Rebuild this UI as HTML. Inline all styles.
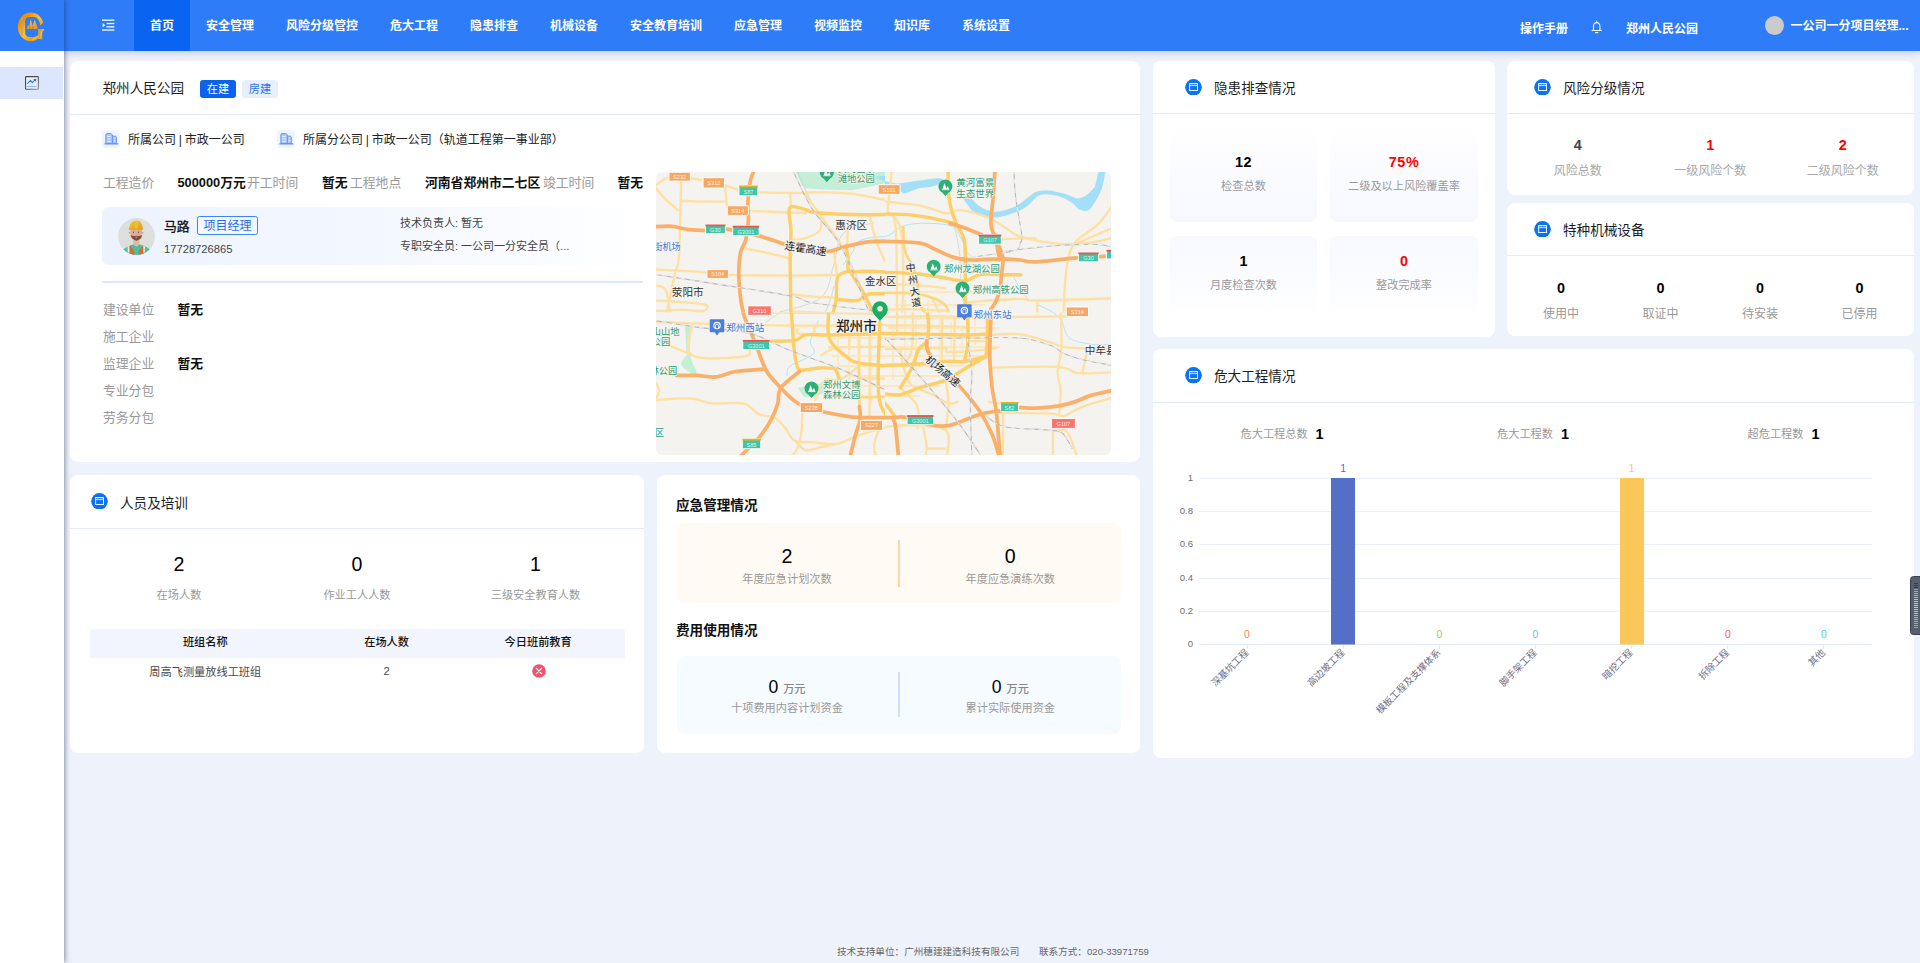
<!DOCTYPE html>
<html lang="zh-CN">
<head>
<meta charset="utf-8">
<title>智慧工地</title>
<style>
*{box-sizing:border-box;margin:0;padding:0}
html,body{width:1920px;height:963px;overflow:hidden}
body{background:#eef2fb;font-family:"Liberation Sans","Noto Sans CJK SC",sans-serif;color:#222;position:relative}
.abs{position:absolute}
.t{position:absolute;white-space:nowrap;line-height:20px;height:20px}
.c{transform:translateX(-50%);text-align:center}
.card{position:absolute;background:#fff;border-radius:8px}
.hr{position:absolute;height:1px;background:#e3ebfb}
/* nav */
#nav{position:absolute;left:0;top:0;width:1920px;height:51px;background:#2f7cf8;box-shadow:0 1px 8px rgba(40,60,100,.26);z-index:5}
#nav .mi{position:absolute;top:1px;height:51px;line-height:51px;color:#fff;font-size:12px;font-weight:bold;white-space:nowrap}
#nav .act{background:#0a64f1;left:134px;width:56px;text-align:center;top:0!important;padding-top:1px}
#side{position:absolute;left:0;top:0;width:64px;height:963px;background:#fff;box-shadow:1px 0 5px rgba(30,40,80,.5);z-index:6}
#side .logo{position:absolute;left:0;top:0;width:64px;height:51px;background:#2f7cf8}
#side .on{position:absolute;left:0;top:67px;width:63px;height:32px;background:#dce7fd}
.ttl{font-size:13.6px;color:#1d1d1d}
.ico{position:absolute;width:17px;height:16.6px}
.num{font-weight:bold;font-size:14.4px}
.lab{font-size:11.2px;color:#999}
.g{color:#999}
.b{font-weight:bold;color:#111}
</style>
</head>
<body>
<!-- NAV -->
<div id="nav">
  <svg class="abs" style="left:102px;top:19px" width="13" height="12" viewBox="0 0 13 12"><g fill="#fff"><rect x="0" y="0.5" width="12.4" height="1.3"/><rect x="4.6" y="3.9" width="7.8" height="1.3"/><rect x="4.6" y="7.2" width="7.8" height="1.3"/><rect x="0" y="10.4" width="12.4" height="1.3"/><path d="M0.6 4.1 L3.4 6.2 L0.6 8.3Z"/></g></svg>
  <div class="mi act">首页</div>
  <div class="mi" style="left:206px">安全管理</div>
  <div class="mi" style="left:286px">风险分级管控</div>
  <div class="mi" style="left:390px">危大工程</div>
  <div class="mi" style="left:470px">隐患排查</div>
  <div class="mi" style="left:550px">机械设备</div>
  <div class="mi" style="left:630px">安全教育培训</div>
  <div class="mi" style="left:734px">应急管理</div>
  <div class="mi" style="left:814px">视频监控</div>
  <div class="mi" style="left:894px">知识库</div>
  <div class="mi" style="left:962px">系统设置</div>
  <div class="mi" style="left:1520px;top:4px">操作手册</div>
  <svg class="abs" style="left:1590.6px;top:20.2px" width="11.4" height="14.6" viewBox="0 0 13 15" preserveAspectRatio="none"><path d="M6.5 1.2 V2.4 M2.8 10.6 V6.6 A3.7 3.9 0 0 1 10.2 6.6 V10.6 M1.2 10.8 H11.8 M5.2 12.9 H7.8" fill="none" stroke="#fff" stroke-width="1.2" stroke-linecap="round"/></svg>
  <div class="mi" style="left:1626px;top:4px">郑州人民公园</div>
  <div class="abs" style="left:1764.5px;top:15.5px;width:19.5px;height:19.5px;border-radius:50%;background:#cbcbcb"></div>
  <div class="mi" style="left:1790.5px">一公司一分项目经理...</div>
</div>
<!-- SIDEBAR -->
<div id="side">
  <div class="logo"></div>
  <svg class="abs" style="left:8px;top:4px" width="48" height="44" viewBox="0 0 1051 963">
    <defs><linearGradient id="gd" x1="0" y1="0" x2="1" y2="1"><stop offset="0" stop-color="#f59a0a"/><stop offset=".22" stop-color="#f08c00"/><stop offset=".5" stop-color="#ffc42e"/><stop offset=".75" stop-color="#f29408"/><stop offset="1" stop-color="#ffc21e"/></linearGradient>
    <linearGradient id="gd2" x1="0" y1="0" x2="0" y2="1"><stop offset="0" stop-color="#ffc62c"/><stop offset="1" stop-color="#f0900a"/></linearGradient></defs>
    <path fill-rule="evenodd" fill="url(#gd)" d="M215 500 A285 315 0 1 1 785 500 A285 315 0 1 1 215 500Z M375 390 C375 310 410 283 480 283 L570 283 C650 290 700 360 705 470 L705 560 C700 660 640 722 560 722 L470 722 C410 722 375 690 375 620Z"/>
    <path d="M640 545 L870 545 L870 360 L800 385 L705 470 L640 470Z" fill="#2f7cf8"/>
    <path d="M690 600 L870 600 L870 830 L600 830 L640 760 L690 700Z" fill="#2f7cf8"/>
    <path d="M660 545 H790 V575 L750 592 V775 L660 758Z" fill="url(#gd)"/>
    <path d="M520 800 Q620 790 662 755 L662 700 Q600 730 520 722Z" fill="url(#gd)"/>
    <rect x="286" y="300" width="36" height="400" fill="#a9a696" opacity=".85"/>
    <rect x="672" y="560" width="34" height="200" fill="#a9a696" opacity=".85"/>
    <path d="M405 545 L440 450 L462 500 L495 335 L540 470 L585 345 L640 500 L650 545Z" fill="url(#gd2)"/>
    <path d="M462 492 L474 548 M540 462 L547 548" stroke="#2f7cf8" stroke-width="11" opacity=".9"/><path d="M478 420 L500 545 M572 420 L592 545" stroke="#c9a050" stroke-width="8" opacity=".5"/>
  </svg>
  <div class="on"></div>
  <svg class="abs" style="left:16px;top:68px" width="32" height="30" viewBox="0 0 1027 963"><defs><linearGradient id="sg" x1="0" y1="0" x2="1" y2="1"><stop offset="0" stop-color="#444"/><stop offset=".5" stop-color="#555"/><stop offset="1" stop-color="#909298"/></linearGradient></defs><rect x="306" y="277" width="412" height="406" rx="28" fill="#e7efff" stroke="url(#sg)" stroke-width="36"/><path d="M362 595 H648" stroke="#8ab3fb" stroke-width="30" stroke-linecap="round"/><path d="M365 498 L465 398 L525 468 L610 385" fill="none" stroke="#2f7cf8" stroke-width="34" stroke-linecap="round" stroke-linejoin="round"/><path d="M556 362 L652 342 L634 442Z" fill="#1a6df5"/></svg>
</div>

<!-- MAIN CARDS GO HERE -->
<svg width="0" height="0" style="position:absolute"><defs>
<symbol id="hi" viewBox="0 0 17 17"><circle cx="8.5" cy="8.5" r="8.5" fill="#0b72f0"/><rect x="4.55" y="4.7" width="8.05" height="7.1" fill="none" stroke="#fff" stroke-width="1" stroke-opacity=".95"/><path d="M4.6 6.8 H12.6" stroke="#fff" stroke-width="0.9" stroke-opacity=".9"/><path d="M5.6 5.75 H8 M9.2 5.75 H11.7" stroke="#fff" stroke-width="0.6" stroke-opacity=".5"/></symbol>
<symbol id="bld" viewBox="195 195 575 575"><rect x="195" y="195" width="575" height="575" rx="105" fill="#eff4fe"/><path d="M318 628 V348 Q318 308 358 308 H462 Q498 308 514 342 L536 392 H618 Q654 392 654 432 V628Z" fill="#aac6fb" stroke="#5e92f6" stroke-width="30" stroke-linejoin="round"/><path d="M528 392 V628" stroke="#5e92f6" stroke-width="30"/><path d="M362 400 H472 M362 482 H472 M362 562 H472 M574 452 H620 M574 534 H620" stroke="#e4edfe" stroke-width="34"/><path d="M288 640 H698" stroke="#5e92f6" stroke-width="44" stroke-linecap="round"/></symbol>
</defs></svg>

<!-- PROJECT CARD -->
<div class="card" style="left:70px;top:61px;width:1070px;height:401px"></div>
<div class="t ttl" style="left:102.5px;top:79px">郑州人民公园</div>
<div class="abs" style="left:200px;top:80px;width:36px;height:18px;border-radius:3px;background:#0a62ee;color:#fff;font-size:11.2px;line-height:18px;text-align:center">在建</div>
<div class="abs" style="left:242px;top:80px;width:36px;height:18px;border-radius:3px;background:#e7effd;color:#2b74f0;font-size:11.2px;line-height:18px;text-align:center">房建</div>
<div class="hr" style="left:70px;top:114px;width:1070px"></div>
<svg class="abs" style="left:102px;top:130px" width="18" height="18"><use href="#bld"/></svg>
<div class="t" style="left:128px;top:130px;font-size:12px;color:#222">所属公司<span style="margin:0 2.8px">|</span>市政一公司</div>
<svg class="abs" style="left:277px;top:130px" width="18" height="18"><use href="#bld"/></svg>
<div class="t" style="left:303px;top:130px;font-size:12px;color:#222">所属分公司<span style="margin:0 2.8px">|</span>市政一公司（轨道工程第一事业部）</div>

<div class="t" style="left:103px;top:173px;font-size:12.8px"><span class="g">工程造价</span></div>
<div class="t" style="left:177.5px;top:173px;font-size:12.8px"><span class="b">500000万元</span></div>
<div class="t" style="left:247px;top:173px;font-size:12.8px"><span class="g">开工时间</span></div>
<div class="t" style="left:322px;top:173px;font-size:12.8px"><span class="b">暂无</span></div>
<div class="t" style="left:350px;top:173px;font-size:12.8px"><span class="g">工程地点</span></div>
<div class="t" style="left:425px;top:173px;font-size:12.8px"><span class="b">河南省郑州市二七区</span></div>
<div class="t" style="left:543px;top:173px;font-size:12.8px"><span class="g">竣工时间</span></div>
<div class="t" style="left:617.5px;top:173px;font-size:12.8px"><span class="b">暂无</span></div>

<div class="abs" style="left:102px;top:207px;width:541px;height:58px;border-radius:7px;background:linear-gradient(90deg,#edf3fe 0,#f4f8ff 55%,#fff 100%)"></div>
<svg class="abs" style="left:112px;top:212px" width="50" height="48" viewBox="0 0 1003 963">
  <defs><clipPath id="avc"><circle cx="492" cy="492" r="370"/></clipPath>
  <linearGradient id="hg" x1="0" y1="0" x2="1" y2="1"><stop offset="0" stop-color="#f2c234"/><stop offset="1" stop-color="#dfa318"/></linearGradient></defs>
  <circle cx="492" cy="492" r="370" fill="#dededd"/>
  <g clip-path="url(#avc)">
    <path d="M215 760 Q300 690 430 648 L490 690 L550 648 Q690 690 775 760 L720 900 L260 900Z" fill="#40c69c"/>
    <path d="M362 668 L445 775 L458 900 L352 900 L352 700Z M622 668 L538 775 L526 900 L640 900 L640 700Z" fill="#e2633d"/>
    <path d="M312 690 L345 680 L350 820 L318 810Z M628 680 L662 690 L656 810 L624 820Z" fill="#f1ece8"/>
    <rect x="628" y="700" width="14" height="110" fill="#b9d9ee"/>
    <path d="M425 540 H548 V650 Q490 700 425 650Z" fill="#dcb8aa"/>
    <circle cx="352" cy="412" r="17" fill="#c99a85"/><circle cx="616" cy="412" r="17" fill="#c99a85"/>
    <path d="M368 340 H602 V470 Q600 560 490 572 Q380 560 368 470Z" fill="#dcae9b"/>
    <path d="M378 462 Q420 495 490 478 Q560 495 600 462 Q600 545 490 575 Q385 545 378 462Z" fill="#7b5038"/>
    <ellipse cx="490" cy="503" rx="26" ry="13" fill="#d98a9a"/>
    <ellipse cx="432" cy="405" rx="10" ry="14" fill="#3d3a40"/><ellipse cx="532" cy="405" rx="10" ry="14" fill="#3d3a40"/>
    <path d="M345 345 Q352 230 430 185 Q490 160 555 185 Q615 235 618 345Z" fill="url(#hg)"/>
    <path d="M336 332 H624 V352 H336Z" fill="#d9a01c"/>
    <path d="M470 178 Q490 170 512 178 L520 330 H462Z" fill="#f4c83e" opacity=".7"/>
  </g>
</svg>
<div class="t" style="left:164px;top:217px;font-size:12.8px;color:#111;-webkit-text-stroke:.3px #111">马路</div>
<div class="abs" style="left:197px;top:215.5px;width:61px;height:19.5px;border:1px solid #3f84f6;border-radius:2.5px;color:#1f6cf0;font-size:12px;line-height:19px;text-align:center;background:#f3f7ff">项目经理</div>
<div class="t" style="left:164px;top:238.5px;font-size:11.2px;color:#444">17728726865</div>
<div class="t" style="left:400px;top:213px;font-size:11px;color:#444">技术负责人: 暂无</div>
<div class="t" style="left:400px;top:236px;font-size:11px;color:#444">专职安全员: 一公司一分安全员（...</div>
<div class="hr" style="left:102px;top:281.4px;width:541px;height:1.3px;background:#dde7fc"></div>
<div class="t g" style="left:103px;top:299.5px;font-size:12.8px">建设单位</div>
<div class="t b" style="left:177.5px;top:299.5px;font-size:12.8px">暂无</div>
<div class="t g" style="left:103px;top:326.7px;font-size:12.8px">施工企业</div>
<div class="t g" style="left:103px;top:353.9px;font-size:12.8px">监理企业</div>
<div class="t b" style="left:177.5px;top:353.9px;font-size:12.8px">暂无</div>
<div class="t g" style="left:103px;top:381.1px;font-size:12.8px">专业分包</div>
<div class="t g" style="left:103px;top:408.3px;font-size:12.8px">劳务分包</div>
<!--MAPSTART-->
<svg class="abs" style="left:656px;top:172px;border-radius:6px" width="455" height="283" viewBox="656 172 455 283" font-family="Liberation Sans, Noto Sans CJK SC, sans-serif">
<defs>
<clipPath id="cqTL"><rect x="656" y="172" width="229" height="140.5"/></clipPath>
<clipPath id="cqTR"><rect x="885" y="172" width="226" height="140.5"/></clipPath>
<clipPath id="cqBL"><rect x="656" y="312.5" width="229" height="142.5"/></clipPath>
<clipPath id="cqBR"><rect x="885" y="312.5" width="226" height="142.5"/></clipPath>
</defs>
<rect x="656" y="172" width="455" height="283" fill="#f5f3f0"/>
<path d="M838 336V396 M849 330V400 M860 336V402 M871 330V404 M893 325V380 M905 300V372 M916 318V372 M928 300V365 M940 318V360 M951 322V352 M962 325V350 M975 318V345 M832 338H992 M828 347H1000 M832 356H985 M838 366H975 M845 376H960 M850 386H940 M856 396H920 M888 328H1000 M895 318H1000 M895 305H985 M895 292H990" fill="none" stroke="#fde5b4" stroke-width="1.3"/>
<g clip-path="url(#cqTL)"><g transform="translate(650,165) scale(0.155743)" fill="#c5eed6"><path d="M930 30 L1560 30 L1560 105 L1450 130 L1300 162 L1100 158 L1000 150 L975 130Z"/></g></g>
<g clip-path="url(#cqBL)"><g transform="translate(650,310) scale(0.155743)" fill="#c5eed6"><path d="M225 110 C231.2 110.0 256.5 80.0 262 110 C267.5 140.0 251.7 241.7 258 290 C264.3 338.3 298.0 380.0 300 400 C302.0 420.0 286.7 418.3 270 410 C253.3 401.7 205.8 370.0 200 350 C194.2 330.0 229.2 300.0 235 290Z M950 500 C958.3 498.3 970.0 495.0 1000 490 C1030.0 485.0 1113.3 461.7 1130 470 C1146.7 478.3 1123.3 525.0 1100 540 C1076.7 555.0 1008.3 556.7 990 560Z"/></g></g>
<g clip-path="url(#cqTL)"><g transform="translate(650,165) scale(0.155743)" fill="#a3e0f7"><path d="M1440 75 C1460.0 74.2 1540.0 61.7 1560 70 C1580.0 78.3 1570.0 119.2 1560 125 C1550.0 130.8 1510.0 108.3 1500 105Z"/></g></g>
<g clip-path="url(#cqTR)"><g transform="translate(880,165) scale(0.155743)" fill="#a3e0f7"><path d="M1405 30 C1411.7 30.0 1441.7 10.0 1445 30 C1448.3 50.0 1435.0 116.7 1425 150 C1415.0 183.3 1399.2 206.7 1385 230 C1370.8 253.3 1357.5 280.8 1340 290 C1322.5 299.2 1298.3 293.3 1280 285 C1261.7 276.7 1251.7 254.2 1230 240 C1208.3 225.8 1180.0 208.3 1150 200 C1120.0 191.7 1075.0 188.3 1050 190 C1025.0 191.7 1016.7 198.3 1000 210 C983.3 221.7 970.0 245.0 950 260 C930.0 275.0 911.7 287.5 880 300 C848.3 312.5 793.3 330.0 760 335 C726.7 340.0 706.7 335.8 680 330 C653.3 324.2 620.0 313.3 600 300 C580.0 286.7 570.8 264.2 560 250 C549.2 235.8 531.7 221.3 535 215 C538.3 208.7 562.5 203.7 580 212 C597.5 220.3 616.7 250.7 640 265 C663.3 279.3 693.3 293.8 720 298 C746.7 302.2 773.3 296.3 800 290 C826.7 283.7 853.3 275.0 880 260 C906.7 245.0 938.3 215.0 960 200 C981.7 185.0 986.7 175.8 1010 170 C1033.3 164.2 1068.3 161.7 1100 165 C1131.7 168.3 1171.7 181.7 1200 190 C1228.3 198.3 1248.3 215.0 1270 215 C1291.7 215.0 1311.7 202.5 1330 190 C1348.3 177.5 1371.7 148.3 1380 140Z M-20 85 C0.0 90.5 55.0 115.5 100 118 C145.0 120.5 203.3 105.5 250 100 C296.7 94.5 354.2 83.7 380 85 C405.8 86.3 413.3 98.8 405 108 C396.7 117.2 355.8 133.0 330 140 C304.2 147.0 278.3 143.0 250 150 C221.7 157.0 181.7 179.5 160 182 C138.3 184.5 150.0 176.7 120 165 C90.0 153.3 3.3 120.8 -20 112Z"/></g></g>
<g clip-path="url(#cqTL)"><g transform="translate(650,165) scale(0.155743)" fill="none" stroke="#a9e3f8" stroke-width="6" stroke-linecap="round"><path d="M1560 455 C1533.3 457.5 1438.3 462.5 1400 470 C1361.7 477.5 1346.7 485.0 1330 500 C1313.3 515.0 1315.0 536.7 1300 560 C1285.0 583.3 1250.0 626.7 1240 640 M1180 780 C1176.7 793.3 1170.0 829.5 1160 860 C1150.0 890.5 1126.7 945.8 1120 963"/></g></g>
<g clip-path="url(#cqTR)"><g transform="translate(880,165) scale(0.155743)" fill="none" stroke="#a9e3f8" stroke-width="6" stroke-linecap="round"><path d="M-20 470 C-6.7 466.7 35.0 461.7 60 450 C85.0 438.3 98.3 412.5 130 400 C161.7 387.5 196.7 376.7 250 375 C303.3 373.3 405.0 374.2 450 390 C495.0 405.8 501.7 441.7 520 470 C538.3 498.3 546.7 538.3 560 560 C573.3 581.7 593.3 593.3 600 600 M860 720 C866.7 733.3 883.3 775.0 900 800 C916.7 825.0 950.0 858.3 960 870 M1020 900 C1033.3 906.7 1076.7 926.7 1100 940 C1123.3 953.3 1150.0 973.3 1160 980"/></g></g>
<g clip-path="url(#cqBL)"><g transform="translate(650,310) scale(0.155743)" fill="none" stroke="#a9e3f8" stroke-width="6" stroke-linecap="round"><path d="M1080 70 C1071.7 91.7 1035.0 165.0 1030 200 C1025.0 235.0 1071.7 253.3 1050 280 C1028.3 306.7 928.3 336.7 900 360 C871.7 383.3 883.3 410.0 880 420"/></g></g>
<g clip-path="url(#cqBR)"><g transform="translate(880,310) scale(0.155743)" fill="none" stroke="#a9e3f8" stroke-width="6" stroke-linecap="round"><path d="M1160 40 C1166.7 60.0 1183.3 133.3 1200 160 C1216.7 186.7 1226.7 189.2 1260 200 C1293.3 210.8 1360.0 222.0 1400 225 C1440.0 228.0 1483.3 219.2 1500 218 M1080 -20 L1160 60"/></g></g>
<g clip-path="url(#cqTL)"><g transform="translate(650,165) scale(0.155743)" fill="none" stroke="#c9c9c9" stroke-width="4"><path d="M1440 370 C1406.7 381.7 1283.3 395.0 1240 440 C1196.7 485.0 1203.3 571.7 1180 640 C1156.7 708.3 1158.3 799.2 1100 850 C1041.7 900.8 875.0 929.2 830 945 M940 30 C960.0 71.7 1011.7 198.3 1060 280 C1108.3 361.7 1185.0 446.7 1230 520 C1275.0 593.3 1295.0 643.3 1330 720 C1365.0 796.7 1421.7 936.7 1440 980"/></g></g>
<g clip-path="url(#cqTR)"><g transform="translate(880,165) scale(0.155743)" fill="none" stroke="#c9c9c9" stroke-width="4"><path d="M480 400 C485.0 426.7 503.3 501.7 510 560 C516.7 618.3 515.0 696.7 520 750 C525.0 803.3 536.7 858.3 540 880"/></g></g>
<g clip-path="url(#cqBL)"><g transform="translate(650,310) scale(0.155743)" fill="none" stroke="#c9c9c9" stroke-width="4"><path d="M860 0 L740 80"/></g></g>
<g clip-path="url(#cqTL)"><g transform="translate(650,165) scale(0.155743)" fill="none" stroke="#fde0a2" stroke-width="15" stroke-linecap="round" stroke-linejoin="round"><path d="M20 140 C30.0 133.3 62.5 110.0 80 100 C97.5 90.0 95.0 82.5 125 80 C155.0 77.5 223.3 81.7 260 85 C296.7 88.3 309.2 92.5 345 100 C380.8 107.5 442.5 121.7 475 130 C507.5 138.3 519.2 143.7 540 150 C560.8 156.3 575.0 163.8 600 168 C625.0 172.2 640.0 173.0 690 175 C740.0 177.0 831.7 180.0 900 180 C968.3 180.0 1033.3 174.2 1100 175 C1166.7 175.8 1223.3 175.0 1300 185 C1376.7 195.0 1516.7 226.7 1560 235 M200 110 C199.2 141.7 197.5 218.3 195 300 C192.5 381.7 190.8 533.3 185 600 C179.2 666.7 174.2 636.7 160 700 C145.8 763.3 110.0 933.3 100 980 M200 230 C225.0 230.8 301.7 234.2 350 235 C398.3 235.8 466.7 235.0 490 235 M480 130 L495 270 M630 295 C675.0 296.7 838.3 302.5 900 305 C961.7 307.5 983.3 309.2 1000 310 M20 120 C30.0 133.3 53.3 171.7 80 200 C106.7 228.3 163.3 275.0 180 290 M20 670 C78.3 673.3 290.0 684.2 370 690 C450.0 695.8 411.7 701.7 500 705 C588.3 708.3 783.3 710.0 900 710 C1016.7 710.0 1150.0 705.8 1200 705 M615 535 C622.5 536.7 632.5 539.2 660 545 C687.5 550.8 740.0 560.8 780 570 C820.0 579.2 880.0 595.0 900 600 M20 870 C50.0 871.7 143.3 875.0 200 880 C256.7 885.0 336.7 890.0 360 900 C383.3 910.0 366.7 926.7 340 940 C313.3 953.3 223.3 973.3 200 980 M20 940 C50.0 938.3 146.7 930.0 200 930 C253.3 930.0 316.7 938.3 340 940 M910 830 C933.3 832.5 1003.3 841.7 1050 845 C1096.7 848.3 1166.7 849.2 1190 850 M990 180 C1008.3 205.0 1065.0 281.7 1100 330 C1135.0 378.3 1173.3 431.7 1200 470 C1226.7 508.3 1250.0 545.0 1260 560 M1100 330 C1098.3 345.0 1106.7 396.7 1090 420 C1073.3 443.3 1030.0 460.0 1000 470 C970.0 480.0 925.0 478.3 910 480 M1410 330 C1416.7 355.0 1435.0 435.0 1450 480 C1465.0 525.0 1481.7 560.0 1500 600 C1518.3 640.0 1550.0 700.0 1560 720 M900 180 L905 275 M1520 200 L1530 320 M1180 560 L1200 700 M1270 420 L1265 520 M20 770 C33.3 775.0 81.7 768.3 100 800 C118.3 831.7 125.0 933.3 130 960 M905 940 C937.5 941.7 1056.7 946.2 1100 950 C1143.3 953.8 1154.2 960.8 1165 963"/></g></g>
<g clip-path="url(#cqTR)"><g transform="translate(880,165) scale(0.155743)" fill="none" stroke="#fde0a2" stroke-width="15" stroke-linecap="round" stroke-linejoin="round"><path d="M-20 230 C25.0 235.0 175.0 246.7 250 260 C325.0 273.3 385.0 305.0 430 310 C475.0 315.0 475.0 285.0 520 290 C565.0 295.0 653.3 321.7 700 340 C746.7 358.3 766.7 380.0 800 400 C833.3 420.0 850.0 443.3 900 460 C950.0 476.7 1041.7 491.7 1100 500 C1158.3 508.3 1200.0 511.7 1250 510 C1300.0 508.3 1358.3 497.5 1400 490 C1441.7 482.5 1483.3 469.2 1500 465 M780 475 L1000 470 M1500 250 C1483.3 271.7 1441.7 338.3 1400 380 C1358.3 421.7 1283.3 455.0 1250 500 C1216.7 545.0 1211.7 583.3 1200 650 C1188.3 716.7 1183.3 845.0 1180 900 C1176.7 955.0 1180.0 966.7 1180 980 M560 880 C616.7 876.7 826.7 861.7 900 860 C973.3 858.3 900.0 870.8 1000 870 C1100.0 869.2 1416.7 857.5 1500 855 M1010 870 L1010 980 M75 30 C72.5 58.3 64.2 155.0 60 200 C55.8 245.0 43.3 266.7 50 300 C56.7 333.3 90.0 286.7 100 400 C110.0 513.3 108.3 883.3 110 980 M50 300 C63.3 316.7 113.3 333.3 130 400 C146.7 466.7 148.3 603.3 150 700 C151.7 796.7 141.7 933.3 140 980 M-20 760 C16.7 761.7 126.7 765.0 200 770 C273.3 775.0 383.3 786.7 420 790 M-20 930 C16.7 929.2 125.0 924.2 200 925 C275.0 925.8 391.7 933.3 430 935 M330 850 L400 980 M1250 510 L1500 400"/></g></g>
<g clip-path="url(#cqBL)"><g transform="translate(650,310) scale(0.155743)" fill="none" stroke="#fde0a2" stroke-width="15" stroke-linecap="round" stroke-linejoin="round"><path d="M20 75 C83.3 77.5 253.3 85.8 400 90 C546.7 94.2 768.3 98.3 900 100 C1031.7 101.7 1080.0 100.8 1190 100 C1300.0 99.2 1498.3 95.8 1560 95 M270 100 C270.0 131.7 215.0 256.7 270 290 C325.0 323.3 538.3 306.7 600 300 C661.7 293.3 633.3 258.3 640 250 M130 230 L270 290 M20 580 C41.7 578.3 106.7 571.7 150 570 C193.3 568.3 238.3 565.0 280 570 C321.7 575.0 346.7 595.0 400 600 C453.3 605.0 550.0 588.3 600 600 C650.0 611.7 666.7 655.0 700 670 C733.3 685.0 771.7 675.0 800 690 C828.3 705.0 848.3 735.0 870 760 C891.7 785.0 900.0 825.0 930 840 C960.0 855.0 1005.0 846.7 1050 850 C1095.0 853.3 1150.0 868.3 1200 860 C1250.0 851.7 1290.0 819.2 1350 800 C1410.0 780.8 1525.0 754.2 1560 745 M980 610 C978.3 641.7 976.7 751.7 970 800 C963.3 848.3 950.8 876.7 940 900 C929.2 923.3 910.8 933.3 905 940 M20 440 C26.7 453.3 60.0 495.0 60 520 C60.0 545.0 26.7 578.3 20 590 M780 15 C841.7 15.8 1020.0 18.3 1150 20 C1280.0 21.7 1491.7 24.2 1560 25 M1280 180 L1280 250 M1340 170 L1340 340 M1410 160 L1410 700 M1150 240 L1560 235 M1340 440 L1560 440 M950 120 C950.0 125.0 933.3 145.0 950 150 C966.7 155.0 1033.3 156.7 1050 150 C1066.7 143.3 1050.0 116.7 1050 110 M1100 290 C1113.3 283.3 1155.0 250.0 1180 250 C1205.0 250.0 1238.3 283.3 1250 290 M1060 580 C1070.0 558.3 1094.2 471.7 1120 450 C1145.8 428.3 1180.0 463.3 1215 450 C1250.0 436.7 1310.8 383.3 1330 370 M930 840 C941.7 850.0 971.7 893.3 1000 900 C1028.3 906.7 1066.7 886.7 1100 880 C1133.3 873.3 1183.3 863.3 1200 860 M1480 740 C1473.3 760.0 1445.0 826.7 1440 860 C1435.0 893.3 1448.3 926.7 1450 940"/></g></g>
<g clip-path="url(#cqBR)"><g transform="translate(880,310) scale(0.155743)" fill="none" stroke="#fde0a2" stroke-width="15" stroke-linecap="round" stroke-linejoin="round"><path d="M720 160 C750.0 159.2 836.7 146.7 900 155 C963.3 163.3 1050.0 195.8 1100 210 C1150.0 224.2 1133.3 233.3 1200 240 C1266.7 246.7 1450.0 248.3 1500 250 M700 370 C773.3 369.2 1045.0 359.2 1140 365 C1235.0 370.8 1210.0 399.2 1270 405 C1330.0 410.8 1461.7 400.8 1500 400 M1160 -20 C1160.8 23.3 1168.3 170.0 1165 240 C1161.7 310.0 1140.8 353.3 1140 400 C1139.2 446.7 1158.3 476.7 1160 520 C1161.7 563.3 1151.7 636.7 1150 660 M790 660 C841.7 660.8 1035.0 661.7 1100 665 C1165.0 668.3 1146.7 687.5 1180 680 C1213.3 672.5 1246.7 640.0 1300 620 C1353.3 600.0 1466.7 570.0 1500 560 M790 660 L790 940 M1110 780 L1110 940 M1110 780 C1125.0 780.0 1174.2 753.3 1200 780 C1225.8 806.7 1254.2 913.3 1265 940 M-20 760 C11.7 756.7 96.7 738.3 170 740 C243.3 741.7 376.7 736.7 420 770 C463.3 803.3 428.3 911.7 430 940 M280 760 C283.3 780.0 298.3 850.0 300 880 C301.7 910.0 291.7 930.0 290 940 M300 890 L420 890 M1330 260 L1300 400 M-20 45 C33.3 44.2 180.0 40.0 300 40 C420.0 40.0 550.0 44.7 700 45 C850.0 45.3 1116.7 42.5 1200 42 M110 -20 L110 150 M210 -20 C209.2 25.0 215.0 186.7 205 250 C195.0 313.3 159.2 341.7 150 360 M400 60 L395 330 M480 60 L475 330 M-20 100 C33.3 100.0 203.3 98.3 300 100 C396.7 101.7 516.7 108.3 560 110 M-20 250 C25.0 250.0 176.7 250.8 250 250 C323.3 249.2 390.0 241.7 420 245 C450.0 248.3 406.7 266.7 430 270 C453.3 273.3 506.7 269.2 560 265 C613.3 260.8 718.3 248.3 750 245 M560 200 L690 200 M420 450 C423.3 475.0 440.0 546.7 440 600 C440.0 653.3 423.3 741.7 420 770 M130 500 C146.7 516.7 210.0 566.7 230 600 C250.0 633.3 248.3 673.3 250 700 C251.7 726.7 241.7 750.0 240 760 M130 250 C133.3 268.3 138.3 321.7 150 360 C161.7 398.3 170.0 450.0 200 480 C230.0 510.0 290.0 520.0 330 540 C370.0 560.0 411.7 591.7 440 600 C468.3 608.3 490.0 591.7 500 590 M700 590 L760 600"/></g></g>
<g clip-path="url(#cqTR)"><g transform="translate(880,165) scale(0.155743)" fill="none" stroke="#fdd680" stroke-width="17" stroke-linecap="round" stroke-linejoin="round"><path d="M150 400 C151.7 425.0 146.7 500.0 160 550 C173.3 600.0 213.3 641.7 230 700 C246.7 758.3 245.8 853.3 260 900 C274.2 946.7 305.8 966.7 315 980 M-20 820 C16.7 820.8 141.7 820.0 200 825 C258.3 830.0 293.3 837.5 330 850 C366.7 862.5 400.8 878.3 420 900 C439.2 921.7 440.8 966.7 445 980"/></g></g>
<g clip-path="url(#cqBL)"><g transform="translate(650,310) scale(0.155743)" fill="none" stroke="#fdd680" stroke-width="17" stroke-linecap="round" stroke-linejoin="round"><path d="M1340 340 L1345 620 M1560 555 C1525.0 555.8 1405.0 561.7 1350 560 C1295.0 558.3 1250.0 547.5 1230 545"/></g></g>
<g clip-path="url(#cqTL)"><g transform="translate(650,165) scale(0.155743)" fill="none" stroke="#fdcf66" stroke-width="22" stroke-linecap="round" stroke-linejoin="round"><path d="M905 980 C904.2 916.7 900.0 693.3 900 600 C900.0 506.7 905.5 474.2 905 420 C904.5 365.8 881.2 297.2 897 275 C912.8 252.8 972.8 282.0 1000 287 C1027.2 292.0 1010.0 299.8 1060 305 C1110.0 310.2 1216.7 315.8 1300 318 C1383.3 320.2 1516.7 318.0 1560 318 M1258 520 C1260.3 533.3 1268.3 573.3 1272 600 C1275.7 626.7 1258.7 666.3 1280 680 C1301.3 693.7 1353.3 680.3 1400 682 C1446.7 683.7 1533.3 688.7 1560 690 M1280 680 C1267.5 686.7 1219.2 688.3 1205 720 C1190.8 751.7 1201.7 826.7 1195 870 C1188.3 913.3 1170.0 961.7 1165 980 M1290 690 C1305.0 715.0 1353.3 791.7 1380 840 C1406.7 888.3 1438.3 956.7 1450 980 M1560 825 C1533.3 825.8 1438.3 822.5 1400 830 C1361.7 837.5 1363.3 864.7 1330 870 C1296.7 875.3 1221.7 863.3 1200 862"/></g></g>
<g clip-path="url(#cqTR)"><g transform="translate(880,165) scale(0.155743)" fill="none" stroke="#fdcf66" stroke-width="22" stroke-linecap="round" stroke-linejoin="round"><path d="M-20 316 C16.7 316.7 123.3 311.8 200 320 C276.7 328.2 390.0 351.7 440 365 C490.0 378.3 483.3 380.8 500 400 C516.7 419.2 532.0 446.7 540 480 C548.0 513.3 547.2 516.7 548 600 C548.8 683.3 545.5 916.7 545 980 M437 30 C437.8 58.3 437.8 155.0 442 200 C446.2 245.0 452.3 266.7 462 300 C471.7 333.3 493.7 383.3 500 400 M-20 688 C25.0 690.0 163.3 691.3 250 700 C336.7 708.7 450.8 732.0 500 740 C549.2 748.0 537.5 746.7 545 748 M555 745 C570.8 737.8 612.5 708.7 650 702 C687.5 695.3 737.5 704.5 780 705 C822.5 705.5 884.2 705.0 905 705"/></g></g>
<g clip-path="url(#cqBL)"><g transform="translate(650,310) scale(0.155743)" fill="none" stroke="#fdcf66" stroke-width="22" stroke-linecap="round" stroke-linejoin="round"><path d="M905 -20 C906.7 3.3 911.7 75.0 915 120 C918.3 165.0 920.8 213.3 925 250 C929.2 286.7 933.3 317.5 940 340 C946.7 362.5 940.0 379.7 965 385 C990.0 390.3 1054.2 373.3 1090 372 C1125.8 370.7 1161.7 372.3 1180 377 C1198.3 381.7 1194.2 387.8 1200 400 C1205.8 412.2 1212.5 441.7 1215 450 M780 200 C805.0 199.2 893.3 201.7 930 195 C966.7 188.3 961.7 165.8 1000 160 C1038.3 154.2 1066.7 161.7 1160 160 C1253.3 158.3 1493.3 151.7 1560 150 M1150 -20 C1150.0 13.3 1133.3 128.3 1150 180 C1166.7 231.7 1218.3 263.3 1250 290 C1281.7 316.7 1288.3 328.0 1340 340 C1391.7 352.0 1523.3 358.3 1560 362 M1475 80 C1474.2 160.0 1455.8 451.7 1470 560 C1484.2 668.3 1545.0 701.7 1560 730"/></g></g>
<g clip-path="url(#cqBR)"><g transform="translate(880,310) scale(0.155743)" fill="none" stroke="#fdcf66" stroke-width="22" stroke-linecap="round" stroke-linejoin="round"><path d="M-20 150 C33.3 150.8 203.3 153.3 300 155 C396.7 156.7 495.0 160.0 560 160 C625.0 160.0 668.3 155.8 690 155 M690 50 C689.7 75.0 689.7 158.3 688 200 C686.3 241.7 681.3 283.3 680 300 M562 50 C562.7 68.3 566.3 126.7 566 160 C565.7 193.3 564.3 221.7 560 250 C555.7 278.3 543.3 316.7 540 330 M300 -20 C302.0 0.0 312.0 63.3 312 100 C312.0 136.7 310.3 175.0 300 200 C289.7 225.0 263.3 228.3 250 250 C236.7 271.7 230.0 305.0 220 330 C210.0 355.0 205.0 371.7 190 400 C175.0 428.3 140.0 483.3 130 500 M-20 355 C16.7 354.2 126.7 354.2 200 350 C273.3 345.8 363.3 333.3 420 330 C476.7 326.7 496.7 335.0 540 330 C583.3 325.0 656.7 305.0 680 300 M-20 530 C3.3 532.5 75.0 550.0 120 545 C165.0 540.0 200.0 515.8 250 500 C300.0 484.2 371.7 470.0 420 450 C468.3 430.0 496.7 405.0 540 380 C583.3 355.0 656.7 313.3 680 300 M-20 540 C-8.3 553.3 30.0 595.0 50 620 C70.0 645.0 91.7 678.3 100 690"/></g></g>
<g clip-path="url(#cqTL)"><g transform="translate(650,165) scale(0.155743)" fill="none" stroke="#fbb06a" stroke-width="24" stroke-linecap="round" stroke-linejoin="round"><path d="M20 398 C38.3 397.2 91.7 390.2 130 393 C168.3 395.8 211.7 410.5 250 415 C288.3 419.5 321.7 420.8 360 420 C398.3 419.2 423.3 404.2 480 410 C536.7 415.8 635.0 438.3 700 455 C765.0 471.7 820.0 495.0 870 510 C920.0 525.0 955.0 537.5 1000 545 C1045.0 552.5 1098.3 558.3 1140 555 C1181.7 551.7 1206.7 535.3 1250 525 C1293.3 514.7 1348.3 499.2 1400 493 C1451.7 486.8 1533.3 488.8 1560 488 M672 30 C667.5 41.7 652.3 63.3 645 100 C637.7 136.7 630.2 208.3 628 250 C625.8 291.7 634.2 311.7 632 350 C629.8 388.3 623.3 445.0 615 480 C606.7 515.0 589.5 523.3 582 560 C574.5 596.7 569.5 646.7 570 700 C570.5 753.3 578.3 833.3 585 880 C591.7 926.7 605.8 963.3 610 980"/></g></g>
<g clip-path="url(#cqTR)"><g transform="translate(880,165) scale(0.155743)" fill="none" stroke="#fbb06a" stroke-width="24" stroke-linecap="round" stroke-linejoin="round"><path d="M-20 488 C25.0 490.0 188.3 491.3 250 500 C311.7 508.7 311.7 524.2 350 540 C388.3 555.8 438.3 583.3 480 595 C521.7 606.7 553.3 608.8 600 610 C646.7 611.2 710.0 602.0 760 602 C810.0 602.0 860.0 606.7 900 610 C940.0 613.3 936.7 624.5 1000 622 C1063.3 619.5 1213.3 600.3 1280 595 C1346.7 589.7 1363.3 592.0 1400 590 C1436.7 588.0 1483.3 584.2 1500 583 M738 30 C736.2 58.3 731.3 143.3 727 200 C722.7 256.7 711.2 328.3 712 370 C712.8 411.7 722.0 421.7 732 450 C742.0 478.3 762.3 513.3 772 540 C781.7 566.7 788.7 583.3 790 610 C791.3 636.7 783.3 668.3 780 700 C776.7 731.7 776.3 770.0 770 800 C763.7 830.0 751.7 859.2 742 880 C732.3 900.8 717.0 917.5 712 925 M745 450 C746.7 465.0 750.8 513.3 755 540 C759.2 566.7 767.5 598.3 770 610 M450 375 C463.3 379.2 496.7 388.3 530 400 C563.3 411.7 630.0 437.5 650 445"/></g></g>
<g clip-path="url(#cqBL)"><g transform="translate(650,310) scale(0.155743)" fill="none" stroke="#fbb06a" stroke-width="24" stroke-linecap="round" stroke-linejoin="round"><path d="M585 -20 C590.8 -3.3 604.2 40.0 620 80 C635.8 120.0 663.3 178.3 680 220 C696.7 261.7 706.7 298.3 720 330 C733.3 361.7 740.0 381.7 760 410 C780.0 438.3 816.7 475.0 840 500 C863.3 525.0 878.3 541.7 900 560 C921.7 578.3 936.7 595.0 970 610 C1003.3 625.0 1053.3 638.3 1100 650 C1146.7 661.7 1210.0 673.3 1250 680 C1290.0 686.7 1288.3 688.3 1340 690 C1391.7 691.7 1523.3 690.0 1560 690 M170 420 C191.7 420.0 258.3 418.3 300 420 C341.7 421.7 378.3 434.2 420 430 C461.7 425.8 498.3 403.3 550 395 C601.7 386.7 700.0 382.5 730 380 M960 395 C940.0 412.5 863.3 465.8 840 500 C816.7 534.2 830.0 566.7 820 600 C810.0 633.3 800.0 663.3 780 700 C760.0 736.7 723.3 790.0 700 820 C676.7 850.0 660.0 860.0 640 880 C620.0 900.0 590.0 930.0 580 940 M1345 620 C1345.8 633.3 1354.2 670.0 1350 700 C1345.8 730.0 1330.8 760.0 1320 800 C1309.2 840.0 1290.8 916.7 1285 940"/></g></g>
<g clip-path="url(#cqBR)"><g transform="translate(880,310) scale(0.155743)" fill="none" stroke="#fbb06a" stroke-width="24" stroke-linecap="round" stroke-linejoin="round"><path d="M712 50 C710.8 91.7 703.7 225.0 705 300 C706.3 375.0 713.3 443.3 720 500 C726.7 556.7 738.3 590.0 745 640 C751.7 690.0 755.5 750.0 760 800 C764.5 850.0 770.0 916.7 772 940 M-20 692 C0.0 691.7 68.3 690.3 100 690 C131.7 689.7 130.0 681.7 170 690 C210.0 698.3 293.3 731.7 340 740 C386.7 748.3 413.3 746.7 450 740 C486.7 733.3 528.3 711.7 560 700 C591.7 688.3 610.0 678.3 640 670 C670.0 661.7 717.5 653.3 740 650 C762.5 646.7 769.2 650.0 775 650 M890 625 C908.3 625.8 956.7 631.7 1000 630 C1043.3 628.3 1108.3 621.7 1150 615 C1191.7 608.3 1216.7 600.8 1250 590 C1283.3 579.2 1308.3 562.5 1350 550 C1391.7 537.5 1475.0 520.8 1500 515 M300 200 C301.7 211.7 293.3 240.0 310 270 C326.7 300.0 365.0 341.7 400 380 C435.0 418.3 480.0 455.0 520 500 C560.0 545.0 606.7 600.0 640 650 C673.3 700.0 699.2 751.7 720 800 C740.8 848.3 757.5 916.7 765 940 M80 690 C83.3 700.0 93.7 708.3 100 750 C106.3 791.7 115.0 908.3 118 940"/></g></g>
<g clip-path="url(#cqTL)"><g transform="translate(650,165) scale(0.155743)" fill="none"><path d="M915 30 C935.8 71.7 992.5 205.0 1040 280 C1087.5 355.0 1156.7 413.3 1200 480 C1243.3 546.7 1263.3 596.7 1300 680 C1336.7 763.3 1400.0 930.0 1420 980 M20 700 C83.3 710.0 253.3 736.7 400 760 C546.7 783.3 796.7 820.0 900 840 C1003.3 860.0 953.3 866.7 1020 880 C1086.7 893.3 1210.0 909.2 1300 920 C1390.0 930.8 1516.7 940.8 1560 945" stroke="#b8b8b8" stroke-width="7"/><path d="M915 30 C935.8 71.7 992.5 205.0 1040 280 C1087.5 355.0 1156.7 413.3 1200 480 C1243.3 546.7 1263.3 596.7 1300 680 C1336.7 763.3 1400.0 930.0 1420 980 M20 700 C83.3 710.0 253.3 736.7 400 760 C546.7 783.3 796.7 820.0 900 840 C1003.3 860.0 953.3 866.7 1020 880 C1086.7 893.3 1210.0 909.2 1300 920 C1390.0 930.8 1516.7 940.8 1560 945" stroke="#fbfbfb" stroke-width="5.2" stroke-dasharray="30 30"/></g></g>
<g clip-path="url(#cqTR)"><g transform="translate(880,165) scale(0.155743)" fill="none"><path d="M860 30 C861.7 58.3 861.7 130.0 870 200 C878.3 270.0 905.0 400.0 910 450 C915.0 500.0 908.3 483.3 900 500 C891.7 516.7 910.0 535.0 860 550 C810.0 565.0 643.3 583.3 600 590 M800 555 C850.0 549.2 1000.0 527.5 1100 520 C1200.0 512.5 1333.3 508.0 1400 510 C1466.7 512.0 1483.3 528.3 1500 532" stroke="#b8b8b8" stroke-width="7"/><path d="M860 30 C861.7 58.3 861.7 130.0 870 200 C878.3 270.0 905.0 400.0 910 450 C915.0 500.0 908.3 483.3 900 500 C891.7 516.7 910.0 535.0 860 550 C810.0 565.0 643.3 583.3 600 590 M800 555 C850.0 549.2 1000.0 527.5 1100 520 C1200.0 512.5 1333.3 508.0 1400 510 C1466.7 512.0 1483.3 528.3 1500 532" stroke="#fbfbfb" stroke-width="5.2" stroke-dasharray="30 30"/></g></g>
<g clip-path="url(#cqBL)"><g transform="translate(650,310) scale(0.155743)" fill="none"><path d="M20 65 C66.7 72.5 196.7 95.8 300 110 C403.3 124.2 540.0 125.0 640 150 C740.0 175.0 806.7 223.3 900 260 C993.3 296.7 1090.0 324.2 1200 370 C1310.0 415.8 1500.0 507.5 1560 535" stroke="#b8b8b8" stroke-width="7"/><path d="M20 65 C66.7 72.5 196.7 95.8 300 110 C403.3 124.2 540.0 125.0 640 150 C740.0 175.0 806.7 223.3 900 260 C993.3 296.7 1090.0 324.2 1200 370 C1310.0 415.8 1500.0 507.5 1560 535" stroke="#fbfbfb" stroke-width="5.2" stroke-dasharray="30 30"/></g></g>
<g clip-path="url(#cqBR)"><g transform="translate(880,310) scale(0.155743)" fill="none"><path d="M-20 190 C73.3 188.3 386.7 181.7 540 180 C693.3 178.3 806.7 171.7 900 180 C993.3 188.3 1053.3 213.3 1100 230 C1146.7 246.7 1146.7 265.0 1180 280 C1213.3 295.0 1246.7 307.0 1300 320 C1353.3 333.0 1466.7 351.7 1500 358 M560 180 C565.0 216.7 586.7 330.0 590 400 C593.3 470.0 580.0 510.0 580 600 C580.0 690.0 588.3 883.3 590 940 M-20 120 C25.0 170.0 163.3 320.0 250 420 C336.7 520.0 434.2 635.0 500 720 C565.8 805.0 620.8 895.0 645 930 M680 680 C700.0 691.7 733.3 735.0 800 750 C866.7 765.0 1018.3 763.3 1080 770 C1141.7 776.7 1144.2 770.0 1170 790 C1195.8 810.0 1224.2 873.3 1235 890" stroke="#b8b8b8" stroke-width="7"/><path d="M-20 190 C73.3 188.3 386.7 181.7 540 180 C693.3 178.3 806.7 171.7 900 180 C993.3 188.3 1053.3 213.3 1100 230 C1146.7 246.7 1146.7 265.0 1180 280 C1213.3 295.0 1246.7 307.0 1300 320 C1353.3 333.0 1466.7 351.7 1500 358 M560 180 C565.0 216.7 586.7 330.0 590 400 C593.3 470.0 580.0 510.0 580 600 C580.0 690.0 588.3 883.3 590 940 M-20 120 C25.0 170.0 163.3 320.0 250 420 C336.7 520.0 434.2 635.0 500 720 C565.8 805.0 620.8 895.0 645 930 M680 680 C700.0 691.7 733.3 735.0 800 750 C866.7 765.0 1018.3 763.3 1080 770 C1141.7 776.7 1144.2 770.0 1170 790 C1195.8 810.0 1224.2 873.3 1235 890" stroke="#fbfbfb" stroke-width="5.2" stroke-dasharray="30 30"/></g></g>
<rect x="668.9" y="172.3" width="21.4" height="8.8" rx="0.8" fill="#f6a764" stroke="#fff" stroke-width="1" stroke-opacity=".9"/>
<text x="679.6" y="178.7" font-size="5.6" fill="#fff" fill-opacity=".85" text-anchor="middle">S232</text>
<rect x="703.1" y="177.7" width="21.4" height="10.3" rx="0.8" fill="#f6a764" stroke="#fff" stroke-width="1" stroke-opacity=".9"/>
<text x="713.9" y="184.9" font-size="5.6" fill="#fff" fill-opacity=".85" text-anchor="middle">S312</text>
<rect x="739.0" y="185.5" width="18.8" height="10.3" rx="0.8" fill="#40c5a8" stroke="#fff" stroke-width="1" stroke-opacity=".9"/>
<rect x="739.0" y="185.5" width="18.8" height="1.8" fill="#e8b020"/>
<text x="748.4" y="193.6" font-size="5.6" fill="#fff" fill-opacity=".85" text-anchor="middle">S87</text>
<rect x="727.3" y="205.8" width="21.1" height="9.6" rx="0.8" fill="#f6a764" stroke="#fff" stroke-width="1" stroke-opacity=".9"/>
<text x="737.8" y="212.6" font-size="5.6" fill="#fff" fill-opacity=".85" text-anchor="middle">S314</text>
<rect x="705.5" y="224.5" width="19.9" height="9.1" rx="0.8" fill="#40c5a8" stroke="#fff" stroke-width="1" stroke-opacity=".9"/>
<rect x="705.5" y="224.5" width="19.9" height="1.8" fill="#ef5350"/>
<text x="715.4" y="231.9" font-size="5.6" fill="#fff" fill-opacity=".85" text-anchor="middle">G30</text>
<rect x="732.7" y="225.7" width="26.4" height="9.9" rx="0.8" fill="#40c5a8" stroke="#fff" stroke-width="1" stroke-opacity=".9"/>
<rect x="732.7" y="225.7" width="26.4" height="1.8" fill="#ef5350"/>
<text x="745.9" y="233.5" font-size="5.6" fill="#fff" fill-opacity=".85" text-anchor="middle">G3001</text>
<rect x="707.0" y="269.6" width="21.4" height="8.8" rx="0.8" fill="#f6a764" stroke="#fff" stroke-width="1" stroke-opacity=".9"/>
<text x="717.7" y="276.0" font-size="5.6" fill="#fff" fill-opacity=".85" text-anchor="middle">S104</text>
<rect x="747.8" y="305.9" width="23.5" height="9.4" rx="0.8" fill="#f8766f" stroke="#fff" stroke-width="1" stroke-opacity=".9"/>
<text x="759.6" y="312.6" font-size="5.6" fill="#fff" fill-opacity=".85" text-anchor="middle">G310</text>
<rect x="878.2" y="184.7" width="21.9" height="9.6" rx="0.8" fill="#f6a764" stroke="#fff" stroke-width="1" stroke-opacity=".9"/>
<text x="889.1" y="191.5" font-size="5.6" fill="#fff" fill-opacity=".85" text-anchor="middle">S101</text>
<rect x="978.6" y="234.6" width="22.7" height="9.6" rx="0.8" fill="#40c5a8" stroke="#fff" stroke-width="1" stroke-opacity=".9"/>
<rect x="978.6" y="234.6" width="22.7" height="1.8" fill="#ef5350"/>
<text x="990.0" y="242.3" font-size="5.6" fill="#fff" fill-opacity=".85" text-anchor="middle">G107</text>
<rect x="1078.4" y="252.5" width="20.2" height="9.3" rx="0.8" fill="#40c5a8" stroke="#fff" stroke-width="1" stroke-opacity=".9"/>
<rect x="1078.4" y="252.5" width="20.2" height="1.8" fill="#ef5350"/>
<text x="1088.5" y="260.0" font-size="5.6" fill="#fff" fill-opacity=".85" text-anchor="middle">G30</text>
<rect x="1066.3" y="307.0" width="22.2" height="9.6" rx="0.8" fill="#f6a764" stroke="#fff" stroke-width="1" stroke-opacity=".9"/>
<text x="1077.4" y="313.8" font-size="5.6" fill="#fff" fill-opacity=".85" text-anchor="middle">S314</text>
<rect x="1106.5" y="249.8" width="10.9" height="9.1" rx="0.8" fill="#40c5a8" stroke="#fff" stroke-width="1" stroke-opacity=".9"/>
<rect x="1106.5" y="249.8" width="10.9" height="1.8" fill="#ef5350"/>
<rect x="742.8" y="339.9" width="26.9" height="9.6" rx="0.8" fill="#40c5a8" stroke="#fff" stroke-width="1" stroke-opacity=".9"/>
<rect x="742.8" y="339.9" width="26.9" height="1.8" fill="#ef5350"/>
<text x="756.3" y="347.6" font-size="5.6" fill="#fff" fill-opacity=".85" text-anchor="middle">G3001</text>
<rect x="800.2" y="402.6" width="22.5" height="9.9" rx="0.8" fill="#f6a764" stroke="#fff" stroke-width="1" stroke-opacity=".9"/>
<text x="811.4" y="409.6" font-size="5.6" fill="#fff" fill-opacity=".85" text-anchor="middle">S228</text>
<rect x="860.4" y="420.4" width="22.2" height="10.0" rx="0.8" fill="#f6a764" stroke="#fff" stroke-width="1" stroke-opacity=".9"/>
<text x="871.5" y="427.4" font-size="5.6" fill="#fff" fill-opacity=".85" text-anchor="middle">S227</text>
<rect x="742.4" y="438.8" width="18.3" height="9.9" rx="0.8" fill="#40c5a8" stroke="#fff" stroke-width="1" stroke-opacity=".9"/>
<rect x="742.4" y="438.8" width="18.3" height="1.8" fill="#e8b020"/>
<text x="751.5" y="446.6" font-size="5.6" fill="#fff" fill-opacity=".85" text-anchor="middle">S85</text>
<rect x="1000.6" y="401.9" width="17.9" height="9.6" rx="0.8" fill="#40c5a8" stroke="#fff" stroke-width="1" stroke-opacity=".9"/>
<rect x="1000.6" y="401.9" width="17.9" height="1.8" fill="#e8b020"/>
<text x="1009.5" y="409.5" font-size="5.6" fill="#fff" fill-opacity=".85" text-anchor="middle">S82</text>
<rect x="907.1" y="415.1" width="26.4" height="9.6" rx="0.8" fill="#40c5a8" stroke="#fff" stroke-width="1" stroke-opacity=".9"/>
<rect x="907.1" y="415.1" width="26.4" height="1.8" fill="#ef5350"/>
<text x="920.3" y="422.8" font-size="5.6" fill="#fff" fill-opacity=".85" text-anchor="middle">G3001</text>
<rect x="1051.5" y="418.5" width="23.8" height="9.9" rx="0.8" fill="#f8766f" stroke="#fff" stroke-width="1" stroke-opacity=".9"/>
<text x="1063.4" y="425.5" font-size="5.6" fill="#fff" fill-opacity=".85" text-anchor="middle">G107</text>
<g transform="translate(826.8,172.8)"><path d="M0 9.4 L-3 6 A7 7 0 1 1 3 6Z" fill="#2fae78"/><path d="M-3 2.2 L-0.9 -3.8 L1.2 2.2Z M1 2.2 L2.4 -1 L3.7 2.2Z" fill="#fff"/><path d="M-3.4 2.9 H3.9" stroke="#fff" stroke-width="0.9"/></g>
<g transform="translate(945.4,186.8)"><path d="M0 9.4 L-3 6 A7 7 0 1 1 3 6Z" fill="#2fae78"/><path d="M-3 2.2 L-0.9 -3.8 L1.2 2.2Z M1 2.2 L2.4 -1 L3.7 2.2Z" fill="#fff"/><path d="M-3.4 2.9 H3.9" stroke="#fff" stroke-width="0.9"/></g>
<g transform="translate(933.7,267.0)"><path d="M0 9.4 L-3 6 A7 7 0 1 1 3 6Z" fill="#2fae78"/><path d="M-3 2.2 L-0.9 -3.8 L1.2 2.2Z M1 2.2 L2.4 -1 L3.7 2.2Z" fill="#fff"/><path d="M-3.4 2.9 H3.9" stroke="#fff" stroke-width="0.9"/></g>
<g transform="translate(962.5,288.8)"><path d="M0 9.4 L-3 6 A7 7 0 1 1 3 6Z" fill="#2fae78"/><path d="M-3 2.2 L-0.9 -3.8 L1.2 2.2Z M1 2.2 L2.4 -1 L3.7 2.2Z" fill="#fff"/><path d="M-3.4 2.9 H3.9" stroke="#fff" stroke-width="0.9"/></g>
<g transform="translate(811.5,388.7)"><path d="M0 9.4 L-3 6 A7 7 0 1 1 3 6Z" fill="#2fae78"/><path d="M-3 2.2 L-0.9 -3.8 L1.2 2.2Z M1 2.2 L2.4 -1 L3.7 2.2Z" fill="#fff"/><path d="M-3.4 2.9 H3.9" stroke="#fff" stroke-width="0.9"/></g>
<g transform="translate(717.0,326.4)"><path d="M-6.5 -6.5 H6.5 V5 H2 L0 8 L-2 5 H-6.5Z" fill="#4a7fe0" stroke="#4a7fe0" stroke-width="1.5" stroke-linejoin="round"/><circle cx="0" cy="-0.8" r="3.2" fill="none" stroke="#fff" stroke-width="1.1"/><path d="M-1.6 2 V-0.6 A1.6 1.6 0 0 1 1.6 -0.6 V2" fill="none" stroke="#fff" stroke-width="0.9"/></g>
<g transform="translate(964.4,311.4)"><path d="M-6.5 -6.5 H6.5 V5 H2 L0 8 L-2 5 H-6.5Z" fill="#4a7fe0" stroke="#4a7fe0" stroke-width="1.5" stroke-linejoin="round"/><circle cx="0" cy="-0.8" r="3.2" fill="none" stroke="#fff" stroke-width="1.1"/><path d="M-1.6 2 V-0.6 A1.6 1.6 0 0 1 1.6 -0.6 V2" fill="none" stroke="#fff" stroke-width="0.9"/></g>
<text x="851.2" y="228.5" font-size="10.6" fill="#333" text-anchor="middle" stroke="#f5f3f0" stroke-width="1.6" paint-order="stroke" stroke-linejoin="round">惠济区</text>
<text x="687.7" y="295.7" font-size="10.6" fill="#333" text-anchor="middle" stroke="#f5f3f0" stroke-width="1.6" paint-order="stroke" stroke-linejoin="round">荥阳市</text>
<text x="880.7" y="284.8" font-size="10.4" fill="#333" text-anchor="middle" stroke="#f5f3f0" stroke-width="1.6" paint-order="stroke" stroke-linejoin="round">金水区</text>
<text x="856.4" y="330.5" font-size="13.6" fill="#222" text-anchor="middle" stroke="#f5f3f0" stroke-width="1.6" paint-order="stroke" stroke-linejoin="round" font-weight="500">郑州市</text>
<text x="1084.8" y="353.5" font-size="10.6" fill="#333" text-anchor="start" stroke="#f5f3f0" stroke-width="1.6" paint-order="stroke" stroke-linejoin="round">中牟县</text>
<text transform="translate(805.7,248.6) rotate(9)" font-size="10.6" fill="#222" text-anchor="middle" stroke="#f5f3f0" stroke-width="1.8" paint-order="stroke" y="3.8">连霍高速</text>
<text transform="translate(942.8,371.1) rotate(40)" font-size="10.4" fill="#222" text-anchor="middle" stroke="#f5f3f0" stroke-width="1.8" paint-order="stroke" y="3.8">机场高速</text>
<text transform="translate(910.7,267.8) rotate(-8)" font-size="9.8" fill="#222" text-anchor="middle" stroke="#f5f3f0" stroke-width="1.8" paint-order="stroke" y="3.5">中</text>
<text transform="translate(913.0,279.9) rotate(-10)" font-size="9.8" fill="#222" text-anchor="middle" stroke="#f5f3f0" stroke-width="1.8" paint-order="stroke" y="3.5">州</text>
<text transform="translate(914.6,291.5) rotate(-12)" font-size="9.8" fill="#222" text-anchor="middle" stroke="#f5f3f0" stroke-width="1.8" paint-order="stroke" y="3.5">大</text>
<text transform="translate(916.1,302.4) rotate(-10)" font-size="9.8" fill="#222" text-anchor="middle" stroke="#f5f3f0" stroke-width="1.8" paint-order="stroke" y="3.5">道</text>
<text x="837.7" y="182.4" font-size="9.3" fill="#2e9b70" text-anchor="start" stroke="#f5f3f0" stroke-width="1.6" paint-order="stroke" stroke-linejoin="round">滩地公园</text>
<text x="837.7" y="172.2" font-size="9.3" fill="#2e9b70" text-anchor="start" stroke="#f5f3f0" stroke-width="1.6" paint-order="stroke" stroke-linejoin="round">黄河国家</text>
<text x="956.3" y="186.3" font-size="9.5" fill="#2e9b70" text-anchor="start" stroke="#f5f3f0" stroke-width="1.6" paint-order="stroke" stroke-linejoin="round">黄河富景</text>
<text x="956.3" y="196.5" font-size="9.5" fill="#2e9b70" text-anchor="start" stroke="#f5f3f0" stroke-width="1.6" paint-order="stroke" stroke-linejoin="round">生态世界</text>
<text x="943.9" y="272.2" font-size="9.3" fill="#2e9b70" text-anchor="start" stroke="#f5f3f0" stroke-width="1.6" paint-order="stroke" stroke-linejoin="round">郑州龙湖公园</text>
<text x="972.7" y="293.3" font-size="9.3" fill="#2e9b70" text-anchor="start" stroke="#f5f3f0" stroke-width="1.6" paint-order="stroke" stroke-linejoin="round">郑州高铁公园</text>
<text x="822.9" y="387.8" font-size="9.4" fill="#2e9b70" text-anchor="start" stroke="#f5f3f0" stroke-width="1.6" paint-order="stroke" stroke-linejoin="round">郑州文博</text>
<text x="822.9" y="397.5" font-size="9.4" fill="#2e9b70" text-anchor="start" stroke="#f5f3f0" stroke-width="1.6" paint-order="stroke" stroke-linejoin="round">森林公园</text>
<text x="679.6" y="334.7" font-size="9.3" fill="#2e9b70" text-anchor="end" stroke="#f5f3f0" stroke-width="1.6" paint-order="stroke" stroke-linejoin="round">嵩山山地</text>
<text x="670.2" y="344.5" font-size="9.3" fill="#2e9b70" text-anchor="end" stroke="#f5f3f0" stroke-width="1.6" paint-order="stroke" stroke-linejoin="round">森林公园</text>
<text x="677.3" y="374.1" font-size="9.3" fill="#2e9b70" text-anchor="end" stroke="#f5f3f0" stroke-width="1.6" paint-order="stroke" stroke-linejoin="round">森林公园</text>
<text x="664.0" y="436.4" font-size="9.3" fill="#2e9b70" text-anchor="end" stroke="#f5f3f0" stroke-width="1.6" paint-order="stroke" stroke-linejoin="round">景区</text>
<text x="680.4" y="249.5" font-size="9" fill="#3c78dc" text-anchor="end" stroke="#f5f3f0" stroke-width="1.6" paint-order="stroke" stroke-linejoin="round">上街机场</text>
<text x="726.3" y="330.9" font-size="9.5" fill="#3c78dc" text-anchor="start" stroke="#f5f3f0" stroke-width="1.6" paint-order="stroke" stroke-linejoin="round">郑州西站</text>
<text x="973.4" y="318.1" font-size="9.5" fill="#3c78dc" text-anchor="start" stroke="#f5f3f0" stroke-width="1.6" paint-order="stroke" stroke-linejoin="round">郑州东站</text>
<g transform="translate(880,309.5)"><path d="M0 11.8 C-2.5 8 -7.8 5 -7.8 -0.4 A7.8 7.8 0 1 1 7.8 -0.4 C7.8 5 2.5 8 0 11.8Z" fill="#18b060"/><circle cx="0" cy="-0.8" r="2.7" fill="#fff"/><circle cx="0.3" cy="-0.4" r="1.6" fill="#f0e2b0"/></g>
</svg>
<!--MAPEND-->

<!-- HIDDEN DANGER CARD -->
<div class="card" style="left:1153px;top:61px;width:342px;height:275.5px"></div>
<svg class="ico" style="left:1185px;top:78.5px"><use href="#hi"/></svg>
<div class="t ttl" style="left:1214px;top:79px">隐患排查情况</div>
<div class="hr" style="left:1153px;top:113px;width:342px"></div>
<div class="abs" style="left:1170px;top:125px;width:147px;height:97px;border-radius:7px;background:linear-gradient(180deg,#fff 0,#fdfdff 25%,#f6f8fe 100%)"></div>
<div class="abs" style="left:1330px;top:125px;width:148px;height:97px;border-radius:7px;background:linear-gradient(180deg,#fff 0,#fdfdff 25%,#f6f8fe 100%)"></div>
<div class="abs" style="left:1170px;top:236px;width:147px;height:80px;border-radius:7px;background:linear-gradient(180deg,#f7f9fe 0,#fbfcff 60%,#fff 100%)"></div>
<div class="abs" style="left:1330px;top:236px;width:148px;height:80px;border-radius:7px;background:linear-gradient(180deg,#f7f9fe 0,#fbfcff 60%,#fff 100%)"></div>
<div class="t c num" style="left:1243.5px;top:151.5px;color:#000;letter-spacing:.5px">12</div>
<div class="t c lab" style="left:1243.5px;top:176px">检查总数</div>
<div class="t c num" style="left:1404px;top:151.5px;color:#f00;letter-spacing:.6px">75%</div>
<div class="t c lab" style="left:1404px;top:176px">二级及以上风险覆盖率</div>
<div class="t c num" style="left:1243.5px;top:250.5px;color:#000">1</div>
<div class="t c lab" style="left:1243.5px;top:275px">月度检查次数</div>
<div class="t c num" style="left:1404px;top:250.5px;color:#f00">0</div>
<div class="t c lab" style="left:1404px;top:275px">整改完成率</div>

<!-- RISK CARD -->
<div class="card" style="left:1507px;top:61px;width:407px;height:133.5px"></div>
<svg class="ico" style="left:1534px;top:78.5px"><use href="#hi"/></svg>
<div class="t ttl" style="left:1563px;top:79px">风险分级情况</div>
<div class="hr" style="left:1507px;top:113px;width:407px"></div>
<div class="t c num" style="left:1577.7px;top:135px;color:#444">4</div>
<div class="t c" style="left:1577.7px;top:160.5px;font-size:12px;color:#a8a8a8">风险总数</div>
<div class="t c num" style="left:1710.2px;top:135px;color:#f00">1</div>
<div class="t c" style="left:1710.2px;top:160.5px;font-size:12px;color:#a8a8a8">一级风险个数</div>
<div class="t c num" style="left:1842.7px;top:135px;color:#f00">2</div>
<div class="t c" style="left:1842.7px;top:160.5px;font-size:12px;color:#a8a8a8">二级风险个数</div>

<!-- MACHINE CARD -->
<div class="card" style="left:1507px;top:203px;width:407px;height:132.5px"></div>
<svg class="ico" style="left:1534px;top:220.5px"><use href="#hi"/></svg>
<div class="t ttl" style="left:1563px;top:221px">特种机械设备</div>
<div class="hr" style="left:1507px;top:255px;width:407px"></div>
<div class="t c num" style="left:1561px;top:277.5px;color:#000">0</div>
<div class="t c" style="left:1561px;top:304px;font-size:12px;color:#999">使用中</div>
<div class="t c num" style="left:1660.5px;top:277.5px;color:#000">0</div>
<div class="t c" style="left:1660.5px;top:304px;font-size:12px;color:#999">取证中</div>
<div class="t c num" style="left:1760px;top:277.5px;color:#000">0</div>
<div class="t c" style="left:1760px;top:304px;font-size:12px;color:#999">待安装</div>
<div class="t c num" style="left:1859.5px;top:277.5px;color:#000">0</div>
<div class="t c" style="left:1859.5px;top:304px;font-size:12px;color:#999">已停用</div>

<!-- DANGER ENGINEERING CARD -->
<div class="card" style="left:1153px;top:349px;width:761px;height:408.5px"></div>
<svg class="ico" style="left:1185px;top:367px"><use href="#hi"/></svg>
<div class="t ttl" style="left:1214px;top:367px">危大工程情况</div>
<div class="hr" style="left:1153px;top:401.5px;width:761px"></div>
<div class="t lab" style="left:1240.5px;top:424px">危大工程总数</div>
<div class="t" style="left:1315.5px;top:423.5px;font-size:14.4px;font-weight:bold;color:#000">1</div>
<div class="t lab" style="left:1497px;top:424px">危大工程数</div>
<div class="t" style="left:1561px;top:423.5px;font-size:14.4px;font-weight:bold;color:#000">1</div>
<div class="t lab" style="left:1747.5px;top:424px">超危工程数</div>
<div class="t" style="left:1811.5px;top:423.5px;font-size:14.4px;font-weight:bold;color:#000">1</div>
<svg class="abs" style="left:1153px;top:455px" width="761" height="300" viewBox="1153 455 761 300" font-family="Liberation Sans, Noto Sans CJK SC, sans-serif" font-size="9.6">
  <g stroke="#eaeffb" stroke-width="1" shape-rendering="crispEdges">
    <path d="M1199 478.5H1872M1199 511.5H1872M1199 544.5H1872M1199 578.5H1872M1199 611.5H1872"/>
  </g>
  <path d="M1199 644.5H1872" stroke="#e3eaf9" stroke-width="1" shape-rendering="crispEdges"/>
  <g stroke="#e3eaf9" stroke-width="1" shape-rendering="crispEdges"><path d="M1247.5 645V649M1343.5 645V649M1439.5 645V649M1535.5 645V649M1631.5 645V649M1727.5 645V649M1823.5 645V649"/></g>
  <g fill="#6e7079" text-anchor="end">
    <text x="1193" y="480.5">1</text><text x="1193" y="514">0.8</text><text x="1193" y="547">0.6</text><text x="1193" y="580.5">0.4</text><text x="1193" y="614">0.2</text><text x="1193" y="647">0</text>
  </g>
  <rect x="1331" y="478" width="24" height="166.5" fill="#5470c6"/>
  <rect x="1620" y="478" width="24" height="166.5" fill="#fac858"/>
  <g text-anchor="middle" font-size="10.4">
    <text x="1247" y="638" fill="#fc8452">0</text>
    <text x="1343.2" y="471.5" fill="#5470c6">1</text>
    <text x="1439.4" y="638" fill="#91cc75">0</text>
    <text x="1535.5" y="638" fill="#73c0de">0</text>
    <text x="1631.6" y="471.5" fill="#fac858">1</text>
    <text x="1727.8" y="638" fill="#ee6666">0</text>
    <text x="1823.9" y="638" fill="#4dd0e1">0</text>
  </g>
  <g fill="#6e6e85" text-anchor="end">
    <text transform="translate(1249.3,653.2) rotate(-45)">深基坑工程</text>
    <text transform="translate(1345.3,653.2) rotate(-45)">高边坡工程</text>
    <text transform="translate(1441.3,653.2) rotate(-45)">模板工程及支撑体系</text>
    <text transform="translate(1537.3,653.2) rotate(-45)">脚手架工程</text>
    <text transform="translate(1633.3,653.2) rotate(-45)">暗挖工程</text>
    <text transform="translate(1729.8,653.2) rotate(-45)">拆除工程</text>
    <text transform="translate(1825.8,653.2) rotate(-45)">其他</text>
  </g>
</svg>

<!-- PEOPLE CARD -->
<div class="card" style="left:70px;top:475px;width:574px;height:277.5px"></div>
<svg class="ico" style="left:91px;top:492.7px"><use href="#hi"/></svg>
<div class="t ttl" style="left:120px;top:493.5px">人员及培训</div>
<div class="hr" style="left:70px;top:528px;width:574px"></div>
<div class="t c" style="left:179px;top:549px;font-size:19.6px;color:#000;line-height:30px;height:30px">2</div>
<div class="t c" style="left:357px;top:549px;font-size:19.6px;color:#000;line-height:30px;height:30px">0</div>
<div class="t c" style="left:535.5px;top:549px;font-size:19.6px;color:#000;line-height:30px;height:30px">1</div>
<div class="t c lab" style="left:179px;top:585.3px">在场人数</div>
<div class="t c lab" style="left:357px;top:585.3px">作业工人人数</div>
<div class="t c lab" style="left:535.5px;top:585.3px">三级安全教育人数</div>
<div class="abs" style="left:90px;top:629px;width:535px;height:28.5px;background:#f2f5fd;border-radius:2px 2px 0 0"></div>
<div class="t c" style="left:205.3px;top:631.5px;font-size:11.2px;color:#111;font-weight:500">班组名称</div>
<div class="t c" style="left:386.6px;top:631.5px;font-size:11.2px;color:#111;font-weight:500">在场人数</div>
<div class="t c" style="left:538.2px;top:631.5px;font-size:11.2px;color:#111;font-weight:500">今日班前教育</div>
<div class="t c" style="left:205.3px;top:662px;font-size:11.2px;color:#4a4a4a">周高飞测量放线工班组</div>
<div class="t c" style="left:386.6px;top:661px;font-size:11.2px;color:#4a4a4a">2</div>
<svg class="abs" style="left:531.5px;top:663.5px" width="14" height="14" viewBox="0 0 14 14"><circle cx="7" cy="7" r="6.8" fill="#f4516c"/><path d="M4.4 4.4 L9.6 9.6 M9.6 4.4 L4.4 9.6" stroke="#fff" stroke-width="1.3" stroke-linecap="round"/></svg>

<!-- EMERGENCY CARD -->
<div class="card" style="left:657px;top:475px;width:483px;height:277.5px"></div>
<div class="t" style="left:676px;top:495.5px;font-size:13.6px;font-weight:bold;color:#111">应急管理情况</div>
<div class="abs" style="left:676.5px;top:523.3px;width:444.3px;height:79.4px;border-radius:8px;background:#fffaf3"></div>
<div class="abs" style="left:898.2px;top:540px;width:1.6px;height:46.5px;background:#fbd7a6"></div>
<div class="t c" style="left:787px;top:540.5px;font-size:19.6px;color:#000;line-height:30px;height:30px">2</div>
<div class="t c" style="left:1010.3px;top:540.5px;font-size:19.6px;color:#000;line-height:30px;height:30px">0</div>
<div class="t c lab" style="left:787px;top:569px">年度应急计划次数</div>
<div class="t c lab" style="left:1010.3px;top:569px">年度应急演练次数</div>
<div class="t" style="left:676px;top:621px;font-size:13.6px;font-weight:bold;color:#111">费用使用情况</div>
<div class="abs" style="left:676.5px;top:655.5px;width:444.3px;height:78.3px;border-radius:8px;background:#f6fbff"></div>
<div class="abs" style="left:898.2px;top:671.5px;width:1.6px;height:45.5px;background:#cfdffb"></div>
<div class="t c" style="left:787px;top:672px;font-size:17.6px;color:#000;line-height:30px;height:30px">0 <span style="font-size:11.2px;color:#888;font-weight:500">万元</span></div>
<div class="t c" style="left:1010.3px;top:672px;font-size:17.6px;color:#000;line-height:30px;height:30px">0 <span style="font-size:11.2px;color:#888;font-weight:500">万元</span></div>
<div class="t c lab" style="left:787px;top:698px">十项费用内容计划资金</div>
<div class="t c lab" style="left:1010.3px;top:698px">累计实际使用资金</div>


<div class="t" style="left:837px;top:942px;font-size:9.6px;color:#666">技术支持单位：广州穗建建造科技有限公司</div>
<div class="t" style="left:1039px;top:942px;font-size:9.6px;color:#666">联系方式：020-33971759</div>
<!-- edge widget -->
<div class="abs" style="left:1910px;top:576px;width:14px;height:59px;background:#575e6e;border-radius:3.5px 0 0 3.5px;border:1px solid #3b404b"></div>
<div class="abs" style="left:1914px;top:583px;width:4.3px;height:46px;background:repeating-linear-gradient(180deg,rgba(87,94,110,0) 0,rgba(87,94,110,0) 1px,#575e6e 1px,#575e6e 2px),linear-gradient(180deg,#353943 0,#353943 12.5%,#f2854a 13%,#f5a845 28%,#f0d048 45%,#c4dc55 60%,#86d874 75%,#4fd2a0 90%,#3ccfb8 100%)"></div>
</body>
</html>
